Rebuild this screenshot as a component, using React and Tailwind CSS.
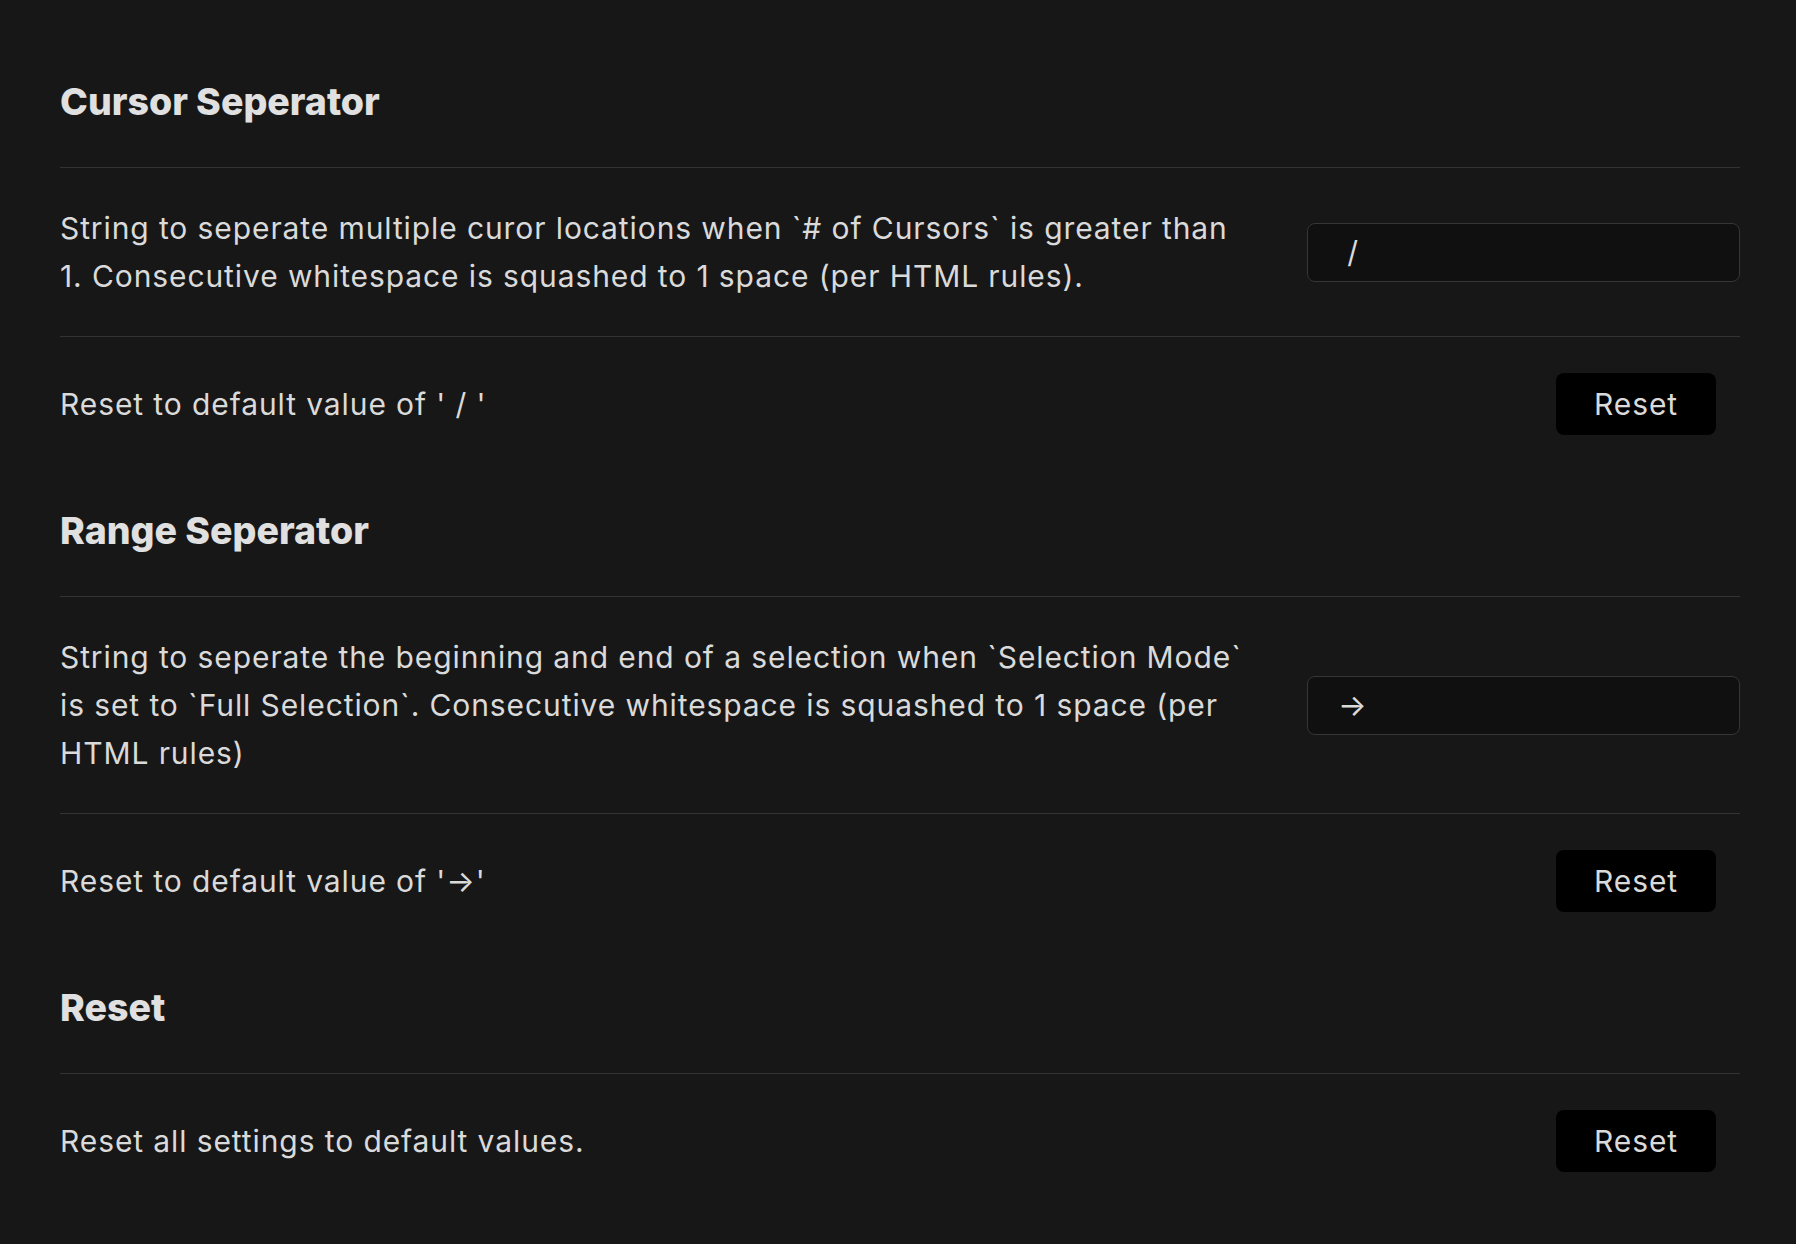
import React from 'react';

const Heading = ({ children }) => (
  <div className="pt-[36px] pb-[41px] text-[37.5px] leading-[48px] font-extrabold tracking-normal text-[#e0e0e1]">
    {children}
  </div>
);

const Row = ({ children, control }) => (
  <div className="flex items-center border-t border-[#333333] py-[36px]">
    <div className="flex-1 min-w-0">{children}</div>
    <div className="ml-[56px] shrink-0">{control}</div>
  </div>
);

const TextInput = ({ value }) => (
  <input
    type="text"
    defaultValue={value}
    className="block w-[433px] h-[59px] pl-[30px] pr-3 rounded-[8px] border border-[#363636] bg-[#101010] text-[30px] tracking-[0.9px] text-[#dadada] outline-none"
  />
);

const ResetButton = () => (
  <button className="mr-[24px] h-[62px] w-[160px] rounded-[8px] bg-black text-[30px] tracking-[0.9px] text-[#dadada]">
    Reset
  </button>
);

export default function App() {
  return (
    <div
      className="min-h-screen bg-[#171717] pl-[60px] pr-[56px] pt-[42px] text-[30px] leading-[48px] tracking-[0.9px] text-[#dadada]"
      style={{ fontFamily: 'Inter, "Noto Sans", sans-serif' }}
    >
      {/* Cursor */}
      <Heading>Cursor Seperator</Heading>
      <Row control={<TextInput value=" / " />}>
        String to seperate multiple curor locations when `# of Cursors` is greater than 1. Consecutive
        whitespace is squashed to 1 space (per HTML rules).
      </Row>
      <Row control={<ResetButton />}>Reset to default value of ' / '</Row>

      {/* Range */}
      <Heading>Range Seperator</Heading>
      <Row control={<TextInput value="→" />}>
        String to seperate the beginning and end of a selection when `Selection Mode` is set to `Full
        Selection`. Consecutive whitespace is squashed to 1 space (per HTML rules)
      </Row>
      <Row control={<ResetButton />}>Reset to default value of '→'</Row>

      {/* Reset all */}
      <Heading>Reset</Heading>
      <Row control={<ResetButton />}>Reset all settings to default values.</Row>
    </div>
  );
}
